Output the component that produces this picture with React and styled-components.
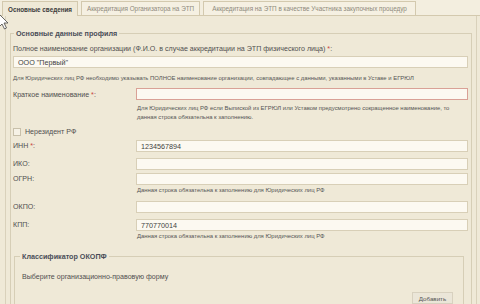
import React from "react";
import styled, { createGlobalStyle } from "styled-components";

const Global = createGlobalStyle`
  html, body { margin: 0; padding: 0; background: #efe9d7; }
  body {
    width: 480px;
    height: 304px;
    overflow: hidden;
    font-family: "Liberation Sans", Arial, sans-serif;
    -webkit-font-smoothing: antialiased;
  }
`;

const Page = styled.div`
  position: relative;
  width: 480px;
  height: 304px;
  background: #efe9d7;
  overflow: hidden;
`;

const TabBar = styled.div`
  display: flex;
  align-items: flex-end;
  height: 15px;
  padding-left: 2px;
  gap: 3px;
  background: #f3eedf;
  border-bottom: 1px solid #d3c9ae;
`;

const Tab = styled.div`
  height: ${(p) => (p.$active ? "15px" : "14px")};
  display: flex;
  align-items: center;
  padding: 0 ${(p) => p.$pad}px;
  box-sizing: border-box;
  border: 1px solid #d3c9ae;
  border-bottom: none;
  background: ${(p) => (p.$active ? "#efe9d7" : "#f5f0e2")};
  color: ${(p) => (p.$active ? "#3b3b3b" : "#8f8a7c")};
  font-size: ${(p) => (p.$active ? "6.3px" : "6.35px")};
  font-weight: ${(p) => (p.$active ? "bold" : "normal")};
  white-space: nowrap;
  margin-bottom: ${(p) => (p.$active ? "-1px" : "0")};
`;

const Frame = styled.div`
  margin: 0 3px 0 5px;
  height: 289px;
  border-left: 1px solid #d9d1bb;
  border-right: 1px solid #d9d1bb;
  padding: 13px 4px 0 4px;
  box-sizing: border-box;
`;

const Fieldset = styled.fieldset`
  margin: 0;
  padding: ${(p) => p.$pad};
  border: 1px solid #d6ceb6;
  border-bottom: none;
  min-width: 0;
  height: ${(p) => p.$h};
  box-sizing: border-box;
`;

const Legend = styled.legend`
  padding: 0 2px;
  margin-left: ${(p) => p.$ml}px;
  font-size: 7.2px;
  font-weight: bold;
  color: #4a4d58;
`;

const Label = styled.div`
  font-size: 7.1px;
  color: #4f4f4f;
  white-space: nowrap;
  margin-top: ${(p) => p.$mt || 0}px;
`;

const Req = styled.span`
  color: #c9473c;
`;

const Input = styled.div`
  height: 12px;
  box-sizing: border-box;
  border: 1px solid ${(p) => (p.$error ? "#d9a196" : "#d8cfb7")};
  background: #fcf9f1;
  font-size: 7.2px;
  color: #3f3f3f;
  padding: 0 4px;
  display: flex;
  align-items: center;
  margin-top: ${(p) => p.$mt || 0}px;
`;

const Help = styled.div`
  font-size: 5.9px;
  line-height: 9px;
  color: #555;
  white-space: nowrap;
  margin-top: ${(p) => p.$mt || 0}px;
  margin-left: ${(p) => p.$ml || 0}px;
`;

const Row = styled.div`
  display: grid;
  grid-template-columns: 123px 332px;
  align-items: center;
  margin-top: ${(p) => p.$mt || 0}px;
`;

const CheckRow = styled.div`
  display: flex;
  align-items: center;
  gap: 4px;
  margin-top: ${(p) => p.$mt || 0}px;
  font-size: 7.1px;
  color: #4f4f4f;
`;

const Box = styled.span`
  width: 6px;
  height: 6px;
  border: 1px solid #c8c0aa;
  background: #f6f2e6;
`;

const Inner = styled.div`
  margin: ${(p) => p.$m};
`;

const Note = styled.div`
  font-size: 7.1px;
  color: #4f4f4f;
  margin: 12px 0 0 7px;
`;

const ButtonRow = styled.div`
  display: flex;
  justify-content: flex-end;
  margin-top: 11px;
  padding-right: 10px;
`;

const Button = styled.div`
  width: 41px;
  height: 12px;
  box-sizing: border-box;
  border: 1px solid #d8d1bf;
  background: #ebe6d8;
  font-size: 6.2px;
  color: #555;
  display: flex;
  align-items: center;
  justify-content: center;
`;

const Cursor = styled.svg`
  position: absolute;
  left: -2px;
  top: 13px;
`;

export default function App() {
  return (
    <Page>
      <Global />
      <TabBar>
        <Tab $active $pad={5}>Основные сведения</Tab>
        <Tab $pad={5}>Аккредитация Организатора на ЭТП</Tab>
        <Tab $pad={8}>Аккредитация на ЭТП в качестве Участника закупочных процедур</Tab>
      </TabBar>
      <Frame>
        <Fieldset $pad="0 3px 0 2px" $h="276px">
          <Legend $ml={1}>Основные данные профиля</Legend>
          <Label $mt={7}>
            Полное наименование организации (Ф.И.О. в случае аккредитации на ЭТП физического лица) <Req>*</Req>:
          </Label>
          <Input $mt={3}>ООО "Первый"</Input>
          <Help $mt={6}>
            Для Юридических лиц РФ необходимо указывать ПОЛНОЕ наименование организации, совпадающее с данными, указанными в Уставе и ЕГРЮЛ
          </Help>
          <Row $mt={5}>
            <Label $mt={2}>
              Краткое наименование <Req>*</Req>:
            </Label>
            <Input $error />
          </Row>
          <Help $ml={124} $mt={4}>
            Для Юридических лиц РФ если Выпиской из ЕГРЮЛ или Уставом предусмотрено сокращенное наименование, то
            <br />
            данная строка обязательна к заполнению.
          </Help>
          <CheckRow $mt={6}>
            <Box />
            Нерезидент РФ
          </CheckRow>
          <Row $mt={4}>
            <Label>
              ИНН <Req>*</Req>:
            </Label>
            <Input>1234567894</Input>
          </Row>
          <Row $mt={6}>
            <Label>ИКО:</Label>
            <Input />
          </Row>
          <Row $mt={3}>
            <Label>ОГРН:</Label>
            <Input />
          </Row>
          <Help $ml={124} $mt={1}>
            Данная строка обязательна к заполнению для Юридических лиц РФ
          </Help>
          <Row $mt={6}>
            <Label>ОКПО:</Label>
            <Input />
          </Row>
          <Row $mt={6}>
            <Label>КПП:</Label>
            <Input>770770014</Input>
          </Row>
          <Help $ml={124} $mt={1}>
            Данная строка обязательна к заполнению для Юридических лиц РФ
          </Help>
          <Inner $m="11px 4px 0 1px">
            <Fieldset $pad="0 0 0 0" $h="70px">
              <Legend $ml={5}>Классификатор ОКОПФ</Legend>
              <Note>Выберите организационно-правовую форму</Note>
              <ButtonRow>
                <Button>Добавить</Button>
              </ButtonRow>
            </Fieldset>
          </Inner>
        </Fieldset>
      </Frame>
      <Cursor width="12" height="18" viewBox="0 0 12 18">
        <path d="M1 1 L1 14 L4 11 L6.5 16 L8.5 15 L6 10 L10 10 Z" fill="#fff" stroke="#444" strokeWidth="0.8" />
      </Cursor>
    </Page>
  );
}
